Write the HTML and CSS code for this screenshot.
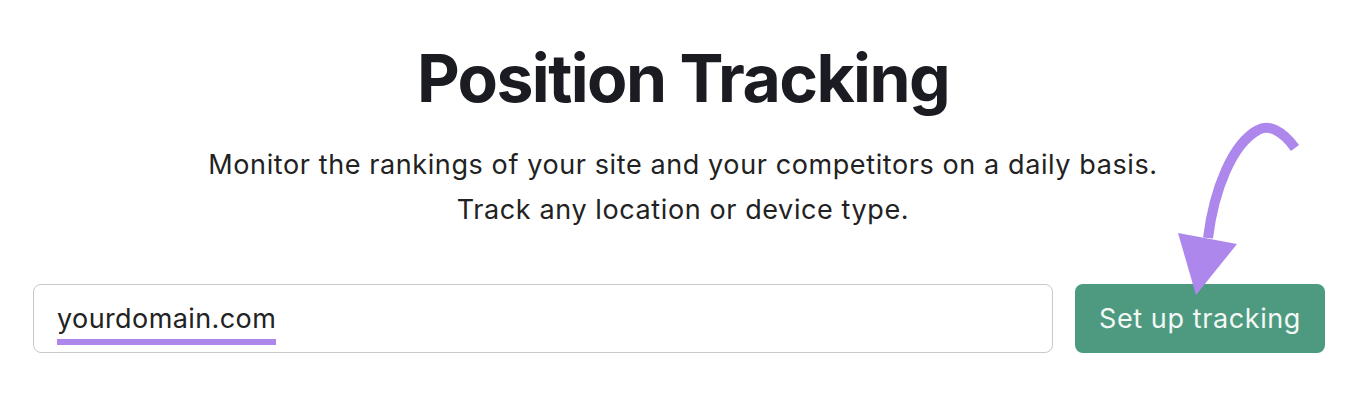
FILE: index.html
```html
<!DOCTYPE html>
<html lang="en">
<head>
  <meta charset="UTF-8">
  <meta name="viewport" content="width=device-width, initial-scale=1.0">
  <title>Position Tracking</title>
  <link rel="stylesheet" href="styles.css">
</head>
<body>

  <main class="page">
    <h1 class="title">Position Tracking</h1>
    <p class="subtitle">Monitor the rankings of your site and your competitors on a daily basis.<br>Track any location or device type.</p>

    <form class="setup-form">
      <div class="domain-field">
        <span class="domain-text">yourdomain.com</span>
      </div>
      <button type="button" class="setup-btn">Set up tracking</button>

      <svg class="arrow" width="140" height="190" viewBox="0 0 140 190">
        <path d="M125 38 C 112 20, 98 14, 88 20 C 62 34, 44 80, 38 128" fill="none" stroke="#ad87ec" stroke-width="10" stroke-linecap="butt"/>
        <polygon points="8,123 67,134 26,185" fill="#ad87ec"/>
      </svg>
    </form>
  </main>

</body>
</html>
```

FILE: styles.css
```css
body {
  font-family: 'Inter', 'Liberation Sans', sans-serif;
  background: #fff;
  margin: 0;
  padding: 0;
  color: #1b1c22;
}

.page {
  display: flex;
  flex-direction: column;
  align-items: center;
  padding-top: 38px;
}

.title {
  margin: 0;
  font-size: 66px;
  font-weight: 700;
  line-height: 80px;
  letter-spacing: -1.6px;
}

.subtitle {
  margin: 24px 0 0;
  font-size: 27px;
  line-height: 45px;
  letter-spacing: 0.6px;
  text-align: center;
  color: #222;
}

.setup-form {
  position: relative;
  align-self: stretch;
  display: flex;
  gap: 22px;
  margin-top: 52px;
  padding: 0 41px 0 33px;
}

.domain-field {
  flex: 1;
  height: 69px;
  box-sizing: border-box;
  border: 1px solid #c9c9cc;
  border-radius: 8px;
  display: flex;
  align-items: center;
  padding: 0 23px;
}

.domain-text {
  font-size: 27px;
  letter-spacing: 0.4px;
  color: #222;
  border-bottom: 6px solid #ad87ec;
  line-height: 32px;
  padding: 10px 0 4px;
}

.setup-btn {
  width: 250px;
  height: 69px;
  border: none;
  border-radius: 8px;
  background: #4d9a80;
  color: #f3f8f5;
  font-family: inherit;
  font-size: 27px;
  letter-spacing: 0.6px;
  cursor: pointer;
}

.arrow {
  position: absolute;
  left: 1170px;
  top: -174px;
}
```
